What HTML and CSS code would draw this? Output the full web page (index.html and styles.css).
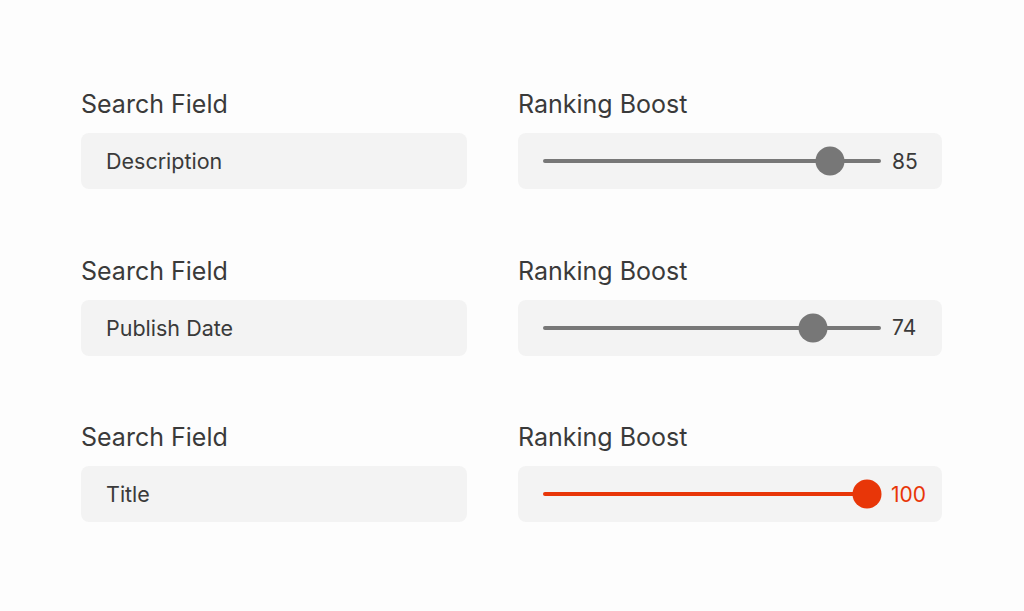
FILE: index.html
```html
<!DOCTYPE html>
<html lang="en">
<head>
  <meta charset="UTF-8" />
  <title>Search Ranking</title>
  <link rel="stylesheet" href="styles.css">
</head>
<body>
  <div class="boost-grid">
    <div class="cell">
      <div class="label">Search Field</div>
      <div class="box field">Description</div>
    </div>
    <div class="cell">
      <div class="label">Ranking Boost</div>
      <div class="box slider">
        <div class="track"><span class="knob" style="left: 84.9%"></span></div>
        <span class="value">85</span>
      </div>
    </div>

    <div class="cell">
      <div class="label">Search Field</div>
      <div class="box field">Publish Date</div>
    </div>
    <div class="cell">
      <div class="label">Ranking Boost</div>
      <div class="box slider">
        <div class="track"><span class="knob" style="left: 80%"></span></div>
        <span class="value">74</span>
      </div>
    </div>

    <div class="cell">
      <div class="label">Search Field</div>
      <div class="box field">Title</div>
    </div>
    <div class="cell">
      <div class="label">Ranking Boost</div>
      <div class="box slider active">
        <div class="track"><span class="knob" style="left: 96.2%"></span></div>
        <span class="value">100</span>
      </div>
    </div>
  </div>
</body>
</html>
```

FILE: styles.css
```css
body {
  font-family: Inter, Roboto, "Liberation Sans", sans-serif;
  background: #fdfdfd;
  color: #3a3a3a;
  margin: 0;
  padding: 88px 0 0 81px;
}
.boost-grid {
  display: grid;
  grid-template-columns: 386px 424px;
  column-gap: 51px;
  row-gap: 65.5px;
}
.label {
  font-size: 25px;
  line-height: 32px;
  margin-bottom: 13px;
}
.box {
  height: 56px;
  background: #f3f3f3;
  border-radius: 8px;
  display: flex;
  align-items: center;
  box-sizing: border-box;
}
.field {
  padding-left: 25px;
  font-size: 21.5px;
}
.slider {
  padding: 0 16px 0 25px;
  gap: 11px;
}
.track {
  flex: 1;
  height: 4px;
  border-radius: 2px;
  background: #777;
  position: relative;
}
.knob {
  position: absolute;
  top: 50%;
  width: 29px;
  height: 29px;
  border-radius: 50%;
  background: #777;
  transform: translate(-50%, -50%);
}
.value {
  min-width: 34px;
  font-size: 21px;
}
.active .track, .active .knob {
  background: #e83608;
}
.active .value {
  color: #e83608;
}
```
